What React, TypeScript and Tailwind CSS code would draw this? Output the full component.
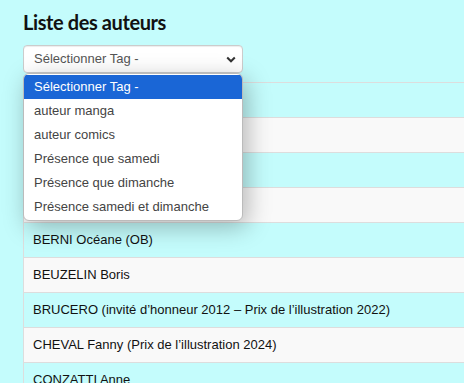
import React from "react";

// rows hidden behind the open dropdown are left blank
const rows = [
  "",
  "",
  "",
  "",
  "BERNI Océane (OB)",
  "BEUZELIN Boris",
  "BRUCERO (invité d’honneur 2012 – Prix de l’illustration 2022)",
  "CHEVAL Fanny (Prix de l’illustration 2024)",
  "CONZATTI Anne",
];

const options = [
  "Sélectionner Tag -",
  "auteur manga",
  "auteur comics",
  "Présence que samedi",
  "Présence que dimanche",
  "Présence samedi et dimanche",
];

export default function App() {
  return (
    <div className="h-[383px] bg-[#c4fcfc] pl-[23px] pt-[9px] overflow-hidden" style={{ fontFamily: "'Liberation Sans', Arial, sans-serif" }}>
      <h1 className="text-[20px] font-bold leading-[26px] tracking-[-0.4px] text-[#111] mb-[10px]" style={{ fontFamily: "Lato, sans-serif" }}>
        Liste des auteurs
      </h1>

      <div className="relative">
        {/* Select */}
        <div className="w-[220px] h-[28px] bg-white border border-[#ccc] rounded-[4px] flex items-center justify-between pl-[10px] pr-[6px] text-[13px] text-[#555] shadow-[inset_0_1px_1px_rgba(0,0,0,0.075)]">
          <span>Sélectionner Tag -</span>
          <svg width="10" height="7" viewBox="0 0 10 7">
            <path d="M1.2 1.5 L5 5.3 L8.8 1.5" fill="none" stroke="#333" strokeWidth="2" />
          </svg>
        </div>

        {/* Table */}
        <div className="mt-[9px] border-l border-t border-[#ddd] w-[460px]">
          {rows.map((r, i) => (
            <div
              key={i}
              className={`h-[35px] border-b border-[#ddd] flex items-center pl-[9px] text-[13px] text-[#111] whitespace-nowrap ${
                i % 2 === 1 ? "bg-[#f9f9f9]" : "bg-transparent"
              }`}
            >
              {r}
            </div>
          ))}
        </div>

        {/* Open dropdown */}
        <div className="absolute left-0 top-[28px] w-[220px] bg-white rounded-[6px] overflow-hidden border border-[#bbb] shadow-[4px_6px_24px_rgba(0,0,0,0.28)] py-px">
          {options.map((o, i) => (
            <div
              key={i}
              className={`h-[24px] flex items-center pl-[10px] text-[13px] ${
                i === 0 ? "bg-[#1a66d6] text-white" : "text-[#444]"
              }`}
            >
              {o}
            </div>
          ))}
        </div>
      </div>
    </div>
  );
}
